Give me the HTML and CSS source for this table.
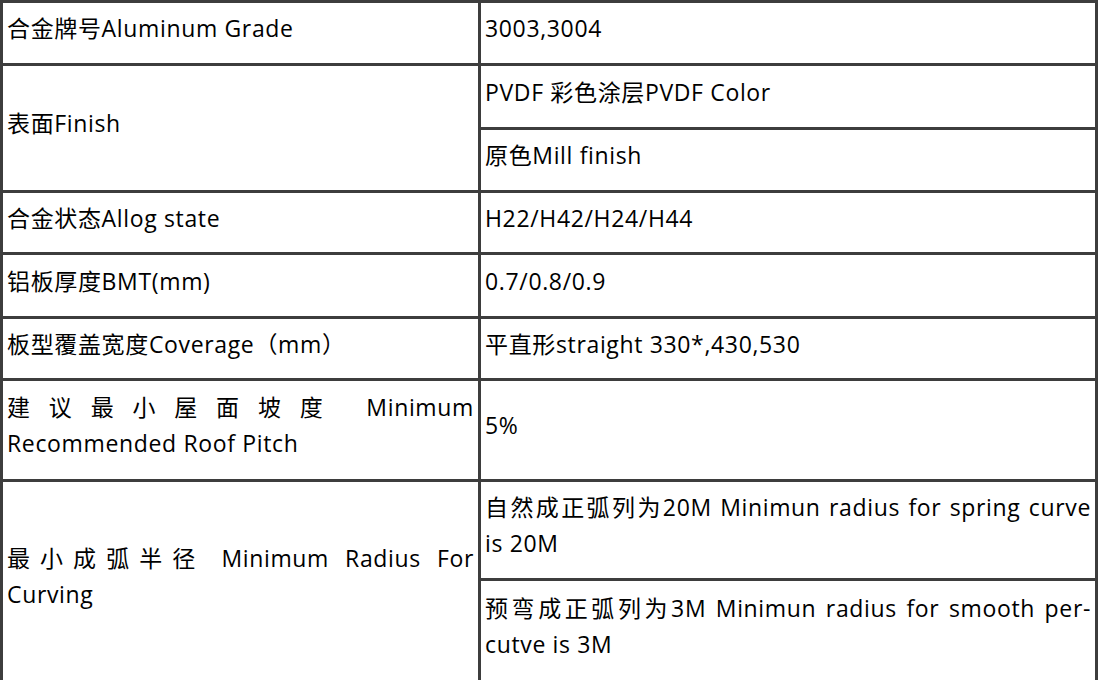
FILE: index.html
```html
<!DOCTYPE html>
<html>
<head>
<meta charset="utf-8">
<link rel="stylesheet" href="styles.css">
</head>
<body>
<table class="spec">
  <tr class="h63"><td class="label">合金牌号Aluminum Grade</td><td class="val">3003,3004</td></tr>
  <tr class="h64"><td class="label" rowspan="2">表面Finish</td><td class="val">PVDF 彩色涂层PVDF Color</td></tr>
  <tr class="h63"><td class="val">原色Mill finish</td></tr>
  <tr class="h62"><td class="label">合金状态Allog state</td><td class="val">H22/H42/H24/H44</td></tr>
  <tr class="h64"><td class="label">铝板厚度BMT(mm)</td><td class="val">0.7/0.8/0.9</td></tr>
  <tr class="h62"><td class="label">板型覆盖宽度Coverage（mm）</td><td class="val">平直形straight 330*,430,530</td></tr>
  <tr class="h101"><td class="label">建议最小屋面坡度 Minimum Recommended Roof Pitch</td><td class="val">5%</td></tr>
  <tr class="h99"><td class="label" rowspan="2">最小成弧半径 Minimum Radius For Curving</td><td class="val">自然成正弧列为20M Minimun radius for spring curve is 20M</td></tr>
  <tr class="h102"><td class="val">预弯成正弧列为3M Minimun radius for smooth per-cutve is 3M</td></tr>
</table>
</body>
</html>
```
FILE: styles.css
```css
html, body {
  margin: 0;
  padding: 0;
  background: #fff;
}
.spec {
  width: 1098px;
  border-collapse: collapse;
  font-family: "Open Sans", "Noto Sans CJK SC", sans-serif;
  font-size: 23px;
  letter-spacing: 0.65px;
  line-height: 36px;
  color: #000;
}
.spec td {
  border: 3px solid #3d3d3d;
  padding: 0 4px 10px 4px;
  vertical-align: middle;
  text-align: justify;
}
.spec .label {
  width: 467px;
}
.h62 { height: 62px; }
.h63 { height: 63px; }
.h64 { height: 64px; }
.h99 { height: 99px; }
.h101 { height: 101px; }
.h102 { height: 102px; }
```
